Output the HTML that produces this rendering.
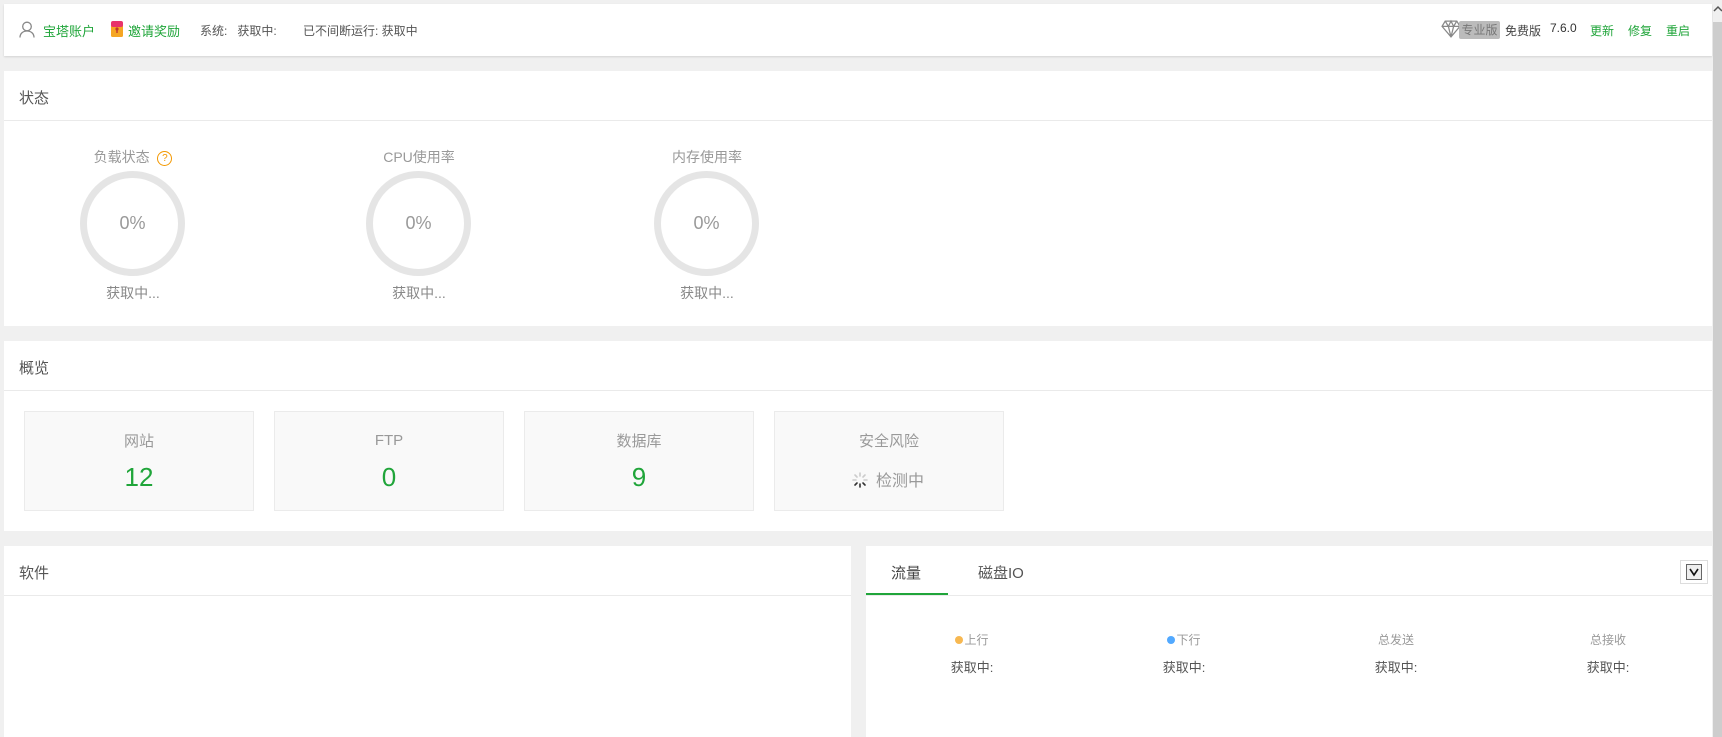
<!DOCTYPE html>
<html><head><meta charset="utf-8"><style>
*{margin:0;padding:0;box-sizing:border-box}
body{width:1722px;height:737px;background:#f0f0f0;font-family:"Liberation Sans","Noto Sans CJK SC",sans-serif;position:relative;overflow:hidden;color:#666}
.a{position:absolute;white-space:nowrap}
.p{position:absolute;background:#fff}
.g{color:#20a53a}
.line{position:absolute;height:1px;background:#eaeaea}
.ring{position:absolute;width:105px;height:105px;border:7px solid #e5e5e5;border-radius:50%;display:flex;align-items:center;justify-content:center;font-size:18px;color:#999}
.c{text-align:center}
.card{position:absolute;top:411px;width:230px;height:100px;background:#f9f9f9;border:1px solid #ebebeb}
.card .l{position:absolute;top:18px;width:100%;text-align:center;font-size:15px;color:#999}
.card .n{position:absolute;top:50px;width:100%;text-align:center;font-size:26px;color:#20a53a}
</style></head><body>
<div class="p" style="left:4px;top:4px;width:1708px;height:52px;box-shadow:0 1px 2px rgba(0,0,0,.12)"></div>
<svg class="a" style="left:19px;top:21px" width="16" height="17" viewBox="0 0 16 17"><circle cx="8" cy="5.5" r="4.3" fill="none" stroke="#888" stroke-width="1.3"/><path d="M1 16.5c0-4 3-6.5 7-6.5s7 2.5 7 6.5" fill="none" stroke="#888" stroke-width="1.3"/></svg>
<div class="a g" style="left:43px;top:21px;font-size:13px">宝塔账户</div>
<svg class="a" style="left:111px;top:21px" width="12" height="16" viewBox="0 0 12 16"><rect x="0" y="3" width="12" height="13" rx="1.5" fill="#f5a623"/><rect x="0" y="0" width="12" height="6" rx="2" fill="#e8336b"/><circle cx="6" cy="8" r="1.6" fill="#c0392b"/><rect x="5.3" y="8" width="1.4" height="4" fill="#c0392b"/></svg>
<div class="a g" style="left:128px;top:21px;font-size:13px">邀请奖励</div>
<div class="a" style="left:200px;top:22px;font-size:12px;color:#555">系统:&nbsp;&nbsp;&nbsp;获取中:</div>
<div class="a" style="left:303px;top:22px;font-size:12px;color:#555">已不间断运行: 获取中</div>
<svg class="a" style="left:1441px;top:19px" width="20" height="20" viewBox="0 0 19 19"><path d="M4 2h11l3 5-8.5 10L1 7z M1 7h17 M4 2l3 5 2.5 10 M15 2l-3 5-2.5 10 M7 7l2.5-5 2.5 5" fill="none" stroke="#888" stroke-width="1.2"/></svg>
<div class="a c" style="left:1459px;top:21px;width:41px;height:18px;background:#bbb;border-radius:2px;color:#777;font-size:12px;line-height:18px">专业版</div>
<div class="a" style="left:1505px;top:22px;font-size:12px;color:#444">免费版</div>
<div class="a" style="left:1550px;top:21px;font-size:12px;color:#333">7.6.0</div>
<div class="a g" style="left:1590px;top:22px;font-size:12px">更新</div>
<div class="a g" style="left:1628px;top:22px;font-size:12px">修复</div>
<div class="a g" style="left:1666px;top:22px;font-size:12px">重启</div>

<div class="p" style="left:4px;top:71px;width:1708px;height:255px"></div>
<div class="a" style="left:19px;top:87px;font-size:15px;color:#555">状态</div>
<div class="line" style="left:4px;top:120px;width:1708px"></div>
<div class="a c" style="left:58px;top:147px;width:150px;font-size:14px;color:#999">负载状态 &nbsp;<span style="display:inline-block;width:15px;height:15px;border:1.3px solid #f39800;border-radius:50%;color:#f39800;font-size:10px;line-height:13px;vertical-align:1px">?</span></div>
<div class="a c" style="left:344px;top:147px;width:150px;font-size:14px;color:#999">CPU使用率</div>
<div class="a c" style="left:632px;top:147px;width:150px;font-size:14px;color:#999">内存使用率</div>
<div class="ring" style="left:80px;top:171px">0%</div>
<div class="ring" style="left:366px;top:171px">0%</div>
<div class="ring" style="left:654px;top:171px">0%</div>
<div class="a c" style="left:58px;top:283px;width:150px;font-size:14px;color:#888">获取中...</div>
<div class="a c" style="left:344px;top:283px;width:150px;font-size:14px;color:#888">获取中...</div>
<div class="a c" style="left:632px;top:283px;width:150px;font-size:14px;color:#888">获取中...</div>

<div class="p" style="left:4px;top:341px;width:1708px;height:190px"></div>
<div class="a" style="left:19px;top:357px;font-size:15px;color:#555">概览</div>
<div class="line" style="left:4px;top:390px;width:1708px"></div>
<div class="card" style="left:24px"><div class="l">网站</div><div class="n">12</div></div>
<div class="card" style="left:274px"><div class="l" style="top:20px">FTP</div><div class="n">0</div></div>
<div class="card" style="left:524px"><div class="l">数据库</div><div class="n">9</div></div>
<div class="card" style="left:774px"><div class="l">安全风险</div>
<svg class="a" style="left:77px;top:60px" width="16" height="16" viewBox="0 0 16 16" stroke-width="1.6" stroke-linecap="round"><g stroke="#ccc"><path d="M8 1v3M13 3l-2 2M15 8h-3M1 8h3M3 3l2 2"/></g><g stroke="#333"><path d="M8 12v3M11 11l2 2M5 11l-2 2"/></g></svg>
<div class="a" style="left:101px;top:55px;font-size:16px;color:#999">检测中</div></div>

<div class="p" style="left:4px;top:546px;width:847px;height:191px"></div>
<div class="a" style="left:19px;top:562px;font-size:15px;color:#555">软件</div>
<div class="line" style="left:4px;top:595px;width:847px"></div>

<div class="p" style="left:866px;top:546px;width:846px;height:191px"></div>
<div class="a" style="left:891px;top:562px;font-size:15px;color:#444">流量</div>
<div class="a" style="left:978px;top:562px;font-size:15px;color:#555">磁盘IO</div>
<div class="line" style="left:866px;top:595px;width:846px"></div>
<div class="a" style="left:866px;top:593px;width:82px;height:2px;background:#20a53a"></div>
<div class="a" style="left:1680px;top:560px;width:28px;height:24px;border:1px solid #ddd;background:#fff"><div style="position:absolute;left:5px;top:3px;width:16px;height:16px;border:1px solid #666;background:#eee"><svg width="14" height="14" viewBox="0 0 14 14" style="position:absolute;left:0;top:0"><path d="M3 4l4 6 4-6" fill="none" stroke="#111" stroke-width="1.6"/></svg></div></div>
<div class="a c" style="left:922px;top:631px;width:100px;font-size:12px;color:#999"><span style="display:inline-block;width:8px;height:8px;border-radius:50%;background:#f7b851;margin-right:1px"></span>上行</div>
<div class="a c" style="left:1134px;top:631px;width:100px;font-size:12px;color:#999"><span style="display:inline-block;width:8px;height:8px;border-radius:50%;background:#52a9ff;margin-right:1px"></span>下行</div>
<div class="a c" style="left:1346px;top:631px;width:100px;font-size:12px;color:#999">总发送</div>
<div class="a c" style="left:1558px;top:631px;width:100px;font-size:12px;color:#999">总接收</div>
<div class="a c" style="left:922px;top:657px;width:100px;font-size:13px;color:#555">获取中:</div>
<div class="a c" style="left:1134px;top:657px;width:100px;font-size:13px;color:#555">获取中:</div>
<div class="a c" style="left:1346px;top:657px;width:100px;font-size:13px;color:#555">获取中:</div>
<div class="a c" style="left:1558px;top:657px;width:100px;font-size:13px;color:#555">获取中:</div>

<div class="a" style="left:1713px;top:0;width:9px;height:737px;background:#f0f0f0"></div>
<div class="a" style="left:1713px;top:22px;width:9px;height:715px;background:#cdcdcd"></div>
<svg class="a" style="left:1713px;top:4px" width="9" height="10" viewBox="0 0 9 10"><path d="M1 7l4-4 4 4" fill="none" stroke="#555" stroke-width="1.5"/></svg>
</body></html>
